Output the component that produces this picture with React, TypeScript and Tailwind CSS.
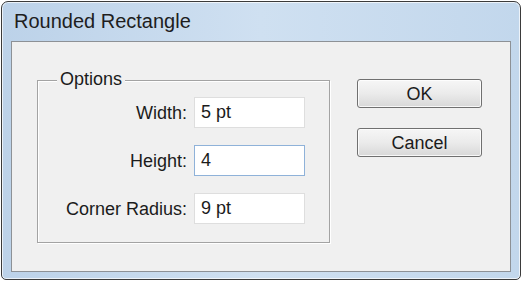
const font = { fontFamily: '"Liberation Sans", Arial, sans-serif' }

function Field({ label, value, focused }: { label: string; value: string; focused?: boolean }) {
  return (
    <div className="flex items-center gap-[7px]">
      <span className="text-[18px] leading-[22px] text-[#1b1b1b]">{label}</span>
      <div
        className={
          focused
            ? "flex h-[31px] w-[111px] items-center border border-[#8fb2d9] bg-white pl-[6px] text-[18px] text-[#1b1b1b]"
            : "flex h-[31px] w-[111px] items-center border border-[#dedede] bg-white pl-[6px] text-[18px] text-[#1b1b1b]"
        }
      >
        {value}
      </div>
    </div>
  )
}

function Button({ children }: { children: string }) {
  return (
    <div className="flex h-[29px] w-[125px] items-center justify-center rounded-[3px] border border-[#707070] bg-gradient-to-b from-[#f6f6f6] via-[#ebebeb] to-[#d8d8d8] text-[18px] leading-[22px] text-[#1b1b1b] shadow-[inset_0_0_0_1px_rgba(255,255,255,0.8)]">
      {children}
    </div>
  )
}

export default function App() {
  return (
    <div className="h-[282px] w-[522px] bg-white pl-[1px] pt-[1px]" style={font}>
      <div className="flex h-[279px] w-[520px] flex-col rounded-t-[7px] rounded-b-[5px] border border-[#3b3b3b] bg-gradient-to-r from-[#bcd2e9] via-[#cfe0f1] to-[#c2d7ec] shadow-[inset_0_0_0_1px_rgba(255,255,255,0.7)]">
        {/* Title bar */}
        <div className="h-[39px] pl-[12px] pt-[7px] text-[20px] leading-[24px] text-[#1e1e1e]">
          Rounded Rectangle
        </div>

        {/* Client area */}
        <div className="mx-[9px] flex h-[231px] items-start border border-[#8d9196] bg-[#f0f0f0] pl-[25px] pt-[38px]">
          <div className="relative flex h-[163px] w-[293px] flex-col items-end gap-[17px] border border-[#a3a3a3] pr-[24px] pt-[16px] shadow-[inset_1px_1px_0_#ffffff,1px_1px_0_#ffffff]">
            <span className="absolute -top-[13px] left-[19px] bg-[#f0f0f0] px-[3px] text-[18px] leading-[22px] text-[#1b1b1b]">
              Options
            </span>
            <Field label="Width:" value="5 pt" />
            <Field label="Height:" value="4" focused />
            <Field label="Corner Radius:" value="9 pt" />
          </div>

          <div className="-mt-[1px] ml-[27px] flex flex-col gap-[20px]">
            <Button>OK</Button>
            <Button>Cancel</Button>
          </div>
        </div>
      </div>
    </div>
  )
}
